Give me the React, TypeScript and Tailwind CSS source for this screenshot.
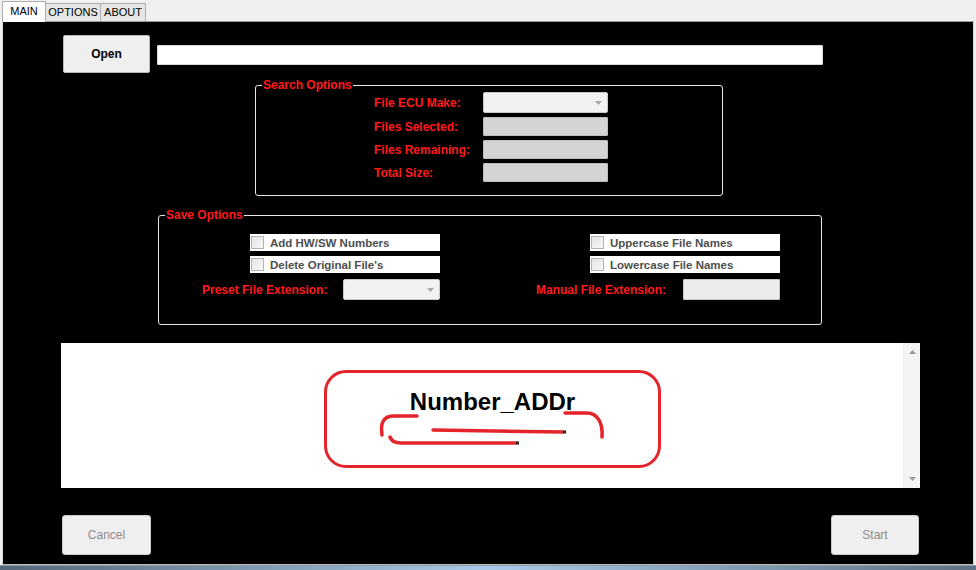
import React from 'react';

const RED = 'text-[#ff1a1a]';

const Label = ({ text, className = '' }: { text: string; className?: string }) => (
  <span className={`text-[12px] font-bold leading-[14px] ${RED} ${className}`}>{text}</span>
);

const GroupBox = ({ title, className, children }: { title: string; className: string; children: React.ReactNode }) => (
  <div className={`relative border border-[#e6e6e6] rounded-[3px] ${className}`}>
    <span className={`absolute left-[6px] -top-[8px] bg-black px-[1px] text-[12px] font-bold leading-[15px] ${RED}`}>
      {title}
    </span>
    {children}
  </div>
);

const Combo = ({ className = '' }: { className?: string }) => (
  <div className={`flex items-center justify-end rounded-[2px] border border-[#c8c8c8] bg-[#f2f2f2] pr-[5px] ${className}`}>
    <svg width="7" height="4" viewBox="0 0 7 4">
      <path d="M0 0 L7 0 L3.5 4 Z" fill="#a8a8a8" />
    </svg>
  </div>
);

const TextBox = ({ className = '' }: { className?: string }) => (
  <div className={`rounded-[1px] border border-[#bdbdbd] ${className}`} />
);

const Check = ({ text, className = '' }: { text: string; className?: string }) => (
  <div className={`flex h-[17px] w-[190px] items-center bg-white ${className}`}>
    <div className="ml-[1px] h-[13px] w-[13px] border border-[#b3b3b3] bg-gradient-to-br from-[#e4e4e4] to-[#f8f8f8]" />
    <span className="ml-[6px] text-[11.5px] font-bold leading-[14px] text-[#4e4e4e]">{text}</span>
  </div>
);

export default function App() {
  return (
    <div className="flex h-[570px] w-[976px] flex-col overflow-hidden bg-[#f0f0f0] font-['Liberation_Sans',Arial,sans-serif]">
      {/* tabs */}
      <div className="flex h-[21px] items-end pl-[2px]">
        <div className="z-10 -mb-[1px] flex h-[21px] w-[44px] items-start justify-center border border-b-0 border-[#adadad] bg-white pt-[3px] text-[11px] leading-[13px] text-black">
          MAIN
        </div>
        <div className="flex h-[18px] w-[55px] items-start justify-center border border-b-0 border-l-0 border-[#adadad] bg-[#e6e6e6] pt-[2px] text-[11px] leading-[13px] text-black">
          OPTIONS
        </div>
        <div className="flex h-[18px] w-[45px] items-start justify-center border border-b-0 border-l-0 border-[#adadad] bg-[#e6e6e6] pt-[2px] text-[11px] leading-[13px] text-black">
          ABOUT
        </div>
      </div>

      {/* main panel */}
      <div className="mx-[2px] flex flex-1 flex-col border border-b-[#bcbcbc] border-l-[#dadada] border-r-[#dadada] border-t-[#9a9a9a] bg-black">
        <div className="mt-[13px] flex h-[38px] items-center">
          <button className="ml-[60px] h-[38px] w-[87px] rounded-[2px] border border-[#b9b9b9] bg-[#efefef] text-[12px] font-bold text-black">
            Open
          </button>
          <div className="ml-[7px] mt-[2px] h-[20px] w-[666px] rounded-[1px] border border-[#d8d8d8] bg-white" />
        </div>

        <GroupBox title="Search Options" className="ml-[252px] mt-[12px] h-[111px] w-[468px]">
          <div className="flex flex-col gap-[4px] pl-[118px] pt-[6px]">
            <div className="flex items-center">
              <Label text="File ECU Make:" className="w-[109px]" />
              <Combo className="h-[21px] w-[125px]" />
            </div>
            <div className="flex items-center">
              <Label text="Files Selected:" className="w-[109px]" />
              <TextBox className="h-[19px] w-[125px] bg-[#d4d4d4]" />
            </div>
            <div className="flex items-center">
              <Label text="Files Remaining:" className="w-[109px]" />
              <TextBox className="h-[19px] w-[125px] bg-[#d4d4d4]" />
            </div>
            <div className="flex items-center">
              <Label text="Total Size:" className="w-[109px]" />
              <TextBox className="h-[19px] w-[125px] bg-[#d4d4d4]" />
            </div>
          </div>
        </GroupBox>

        <GroupBox title="Save Options" className="ml-[155px] mt-[19px] h-[110px] w-[664px]">
          <div className="flex flex-col pt-[18px]">
            <div className="flex">
              <Check text="Add HW/SW Numbers" className="ml-[91px]" />
              <Check text="Uppercase File Names" className="ml-[150px]" />
            </div>
            <div className="mt-[5px] flex">
              <Check text="Delete Original File's" className="ml-[91px]" />
              <Check text="Lowercase File Names" className="ml-[150px]" />
            </div>
            <div className="mt-[6px] flex h-[21px] items-center">
              <Label text="Preset File Extension:" className="ml-[43px] w-[141px]" />
              <Combo className="h-[21px] w-[97px] bg-[#ececec]" />
              <Label text="Manual File Extension:" className="ml-[96px] w-[147px]" />
              <TextBox className="h-[21px] w-[97px] border-[#c8c8c8] bg-[#ececec]" />
            </div>
          </div>
        </GroupBox>

        {/* output area */}
        <div className="ml-[58px] mt-[18px] flex h-[145px] w-[859px] bg-white">
          <div className="flex-1">
            <div className="relative ml-[263px] mt-[27px] flex h-[98px] w-[337px] justify-center rounded-[22px] border-[3px] border-[#e5232b]">
              <span className="mt-[15px] text-[24px] font-bold leading-[28px] text-black">Number_ADDr</span>
              <svg className="absolute -left-[3px] -top-[3px]" width="337" height="98" viewBox="0 0 337 98" fill="none">
                <path d="M58 65 C56 52 60 46 70 46 L93 46" stroke="#e5232b" strokeWidth="3.5" strokeLinecap="round" />
                <path d="M241 43 L263 43 C273 43 279 52 278 67" stroke="#e5232b" strokeWidth="3.5" strokeLinecap="round" />
                <path d="M66 67 C68 72 72 73 80 73 L192 73" stroke="#e5232b" strokeWidth="3.5" strokeLinecap="round" />
                <path d="M109 60 L239 62" stroke="#e5232b" strokeWidth="3.5" strokeLinecap="round" />
                <path d="M192 73 L195 73" stroke="#222" strokeWidth="3" />
                <path d="M239 62 L242 62" stroke="#222" strokeWidth="3" />
              </svg>
            </div>
          </div>
          <div className="flex w-[17px] flex-col items-center justify-between border-l border-[#ececec] bg-[#f4f4f4] py-[7px]">
            <svg width="7" height="4" viewBox="0 0 7 4">
              <path d="M0 4 L7 4 L3.5 0 Z" fill="#9a9a9a" />
            </svg>
            <svg width="7" height="4" viewBox="0 0 7 4">
              <path d="M0 0 L7 0 L3.5 4 Z" fill="#9a9a9a" />
            </svg>
          </div>
        </div>

        <div className="ml-[59px] mr-[54px] mt-[27px] flex justify-between">
          <button className="h-[40px] w-[89px] rounded-[3px] border border-[#cacaca] bg-[#efefef] text-[12px] text-[#8c8c8c]">
            Cancel
          </button>
          <button className="h-[40px] w-[88px] rounded-[3px] border border-[#cacaca] bg-[#efefef] text-[12px] text-[#8c8c8c]">
            Start
          </button>
        </div>
      </div>

      {/* taskbar edge */}
      <div className="h-[5px] border-t border-[#8a9aa8] bg-gradient-to-r from-[#56687a] via-[#a9cbea] to-[#5f7184]" />
    </div>
  );
}
